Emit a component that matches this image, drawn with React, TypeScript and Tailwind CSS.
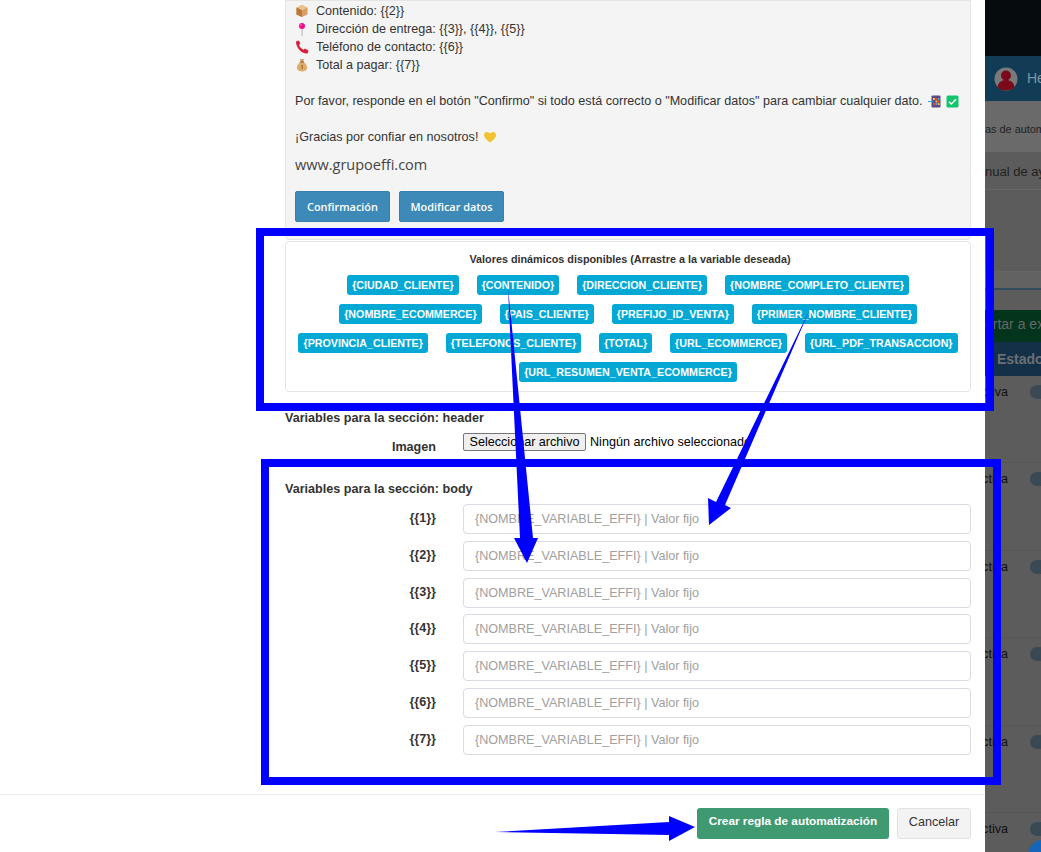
const chips = [
  "{CIUDAD_CLIENTE}",
  "{CONTENIDO}",
  "{DIRECCION_CLIENTE}",
  "{NOMBRE_COMPLETO_CLIENTE}",
  "{NOMBRE_ECOMMERCE}",
  "{PAIS_CLIENTE}",
  "{PREFIJO_ID_VENTA}",
  "{PRIMER_NOMBRE_CLIENTE}",
  "{PROVINCIA_CLIENTE}",
  "{TELEFONOS_CLIENTE}",
  "{TOTAL}",
  "{URL_ECOMMERCE}",
  "{URL_PDF_TRANSACCION}",
  "{URL_RESUMEN_VENTA_ECOMMERCE}",
];

const BoxIcon = () => (
  <svg width="14" height="14" viewBox="0 0 14 14" className="shrink-0">
    <path d="M7 1l5.500 2.600v6.800L7 13 1.500 10.400V3.600z" fill="#d9a066" />
    <path d="M7 6.200L1.500 3.600 7 1l5.500 2.600z" fill="#eec28e" />
    <path d="M7 6.200V13L1.500 10.400V3.600z" fill="#b87a3c" />
  </svg>
);
const PinIcon = () => (
  <svg width="14" height="14" viewBox="0 0 14 14" className="shrink-0">
    <rect x="6.500" y="5" width="1.200" height="9" fill="#b9bfc4" />
    <circle cx="7" cy="4" r="3" fill="#ee0d8c" />
    <circle cx="6" cy="3" r="0.800" fill="#ff8ccb" />
  </svg>
);
const PhoneIcon = () => (
  <svg width="14" height="14" viewBox="0 0 14 14" className="shrink-0">
    <path d="M1 1.500L3.800 0.500 5.300 3.600 4 5c.7 2 2.300 3.800 4.600 4.700L10 8.400l3.400 2.200-.6 2.600c-2.200.6-5.200-.2-7.600-2.400C2.600 8.400.8 4.500 1 1.500z" fill="#d8203a" />
  </svg>
);
const BagIcon = () => (
  <svg width="14" height="14" viewBox="0 0 14 14" className="shrink-0">
    <path d="M5 1h4L8.300 4h-2.600z" fill="#d9a066" />
    <path d="M5.500 4h3c2.500 1.500 4 4 3.500 6.500C11.600 12.600 9.500 13.500 7 13.500S2.400 12.600 2 10.500C1.500 8 3 5.500 5.500 4z" fill="#e0ac6c" />
    <rect x="5" y="3.500" width="4" height="1" fill="#8a5a2c" />
    <rect x="6.500" y="7" width="1.200" height="4" fill="#9a6a3a" />
  </svg>
);
const PhoneArrowIcon = () => (
  <svg width="13" height="13" viewBox="0 0 13 13" className="shrink-0">
    <rect x="3.500" y="0.500" width="9" height="12" rx="1" fill="#5b4a86" />
    <rect x="5" y="3" width="2" height="2" fill="#f2c230" />
    <rect x="7.500" y="3" width="2" height="2" fill="#e5463a" />
    <rect x="10" y="3" width="1.500" height="2" fill="#4aa3e8" />
    <rect x="7.500" y="5.500" width="2" height="2" fill="#f2c230" />
    <rect x="10" y="5.500" width="1.500" height="2" fill="#e5463a" />
    <rect x="5" y="8" width="2" height="2" fill="#e5463a" />
    <rect x="7.500" y="8" width="2" height="2" fill="#4aa3e8" />
    <rect x="10" y="8" width="1.500" height="2" fill="#f2c230" />
    <path d="M0 6h5v1H0z" fill="#2aa5e8" />
  </svg>
);
const CheckIcon = () => (
  <svg width="13" height="13" viewBox="0 0 13 13" className="shrink-0">
    <rect x="0.500" y="0.500" width="12" height="12" rx="1.500" fill="#12c46c" />
    <path d="M3 6.800l2.300 2.200L10 4.300" fill="none" stroke="#fff" strokeWidth="1.500" />
  </svg>
);
const HeartIcon = () => (
  <svg width="14" height="14" viewBox="0 0 14 14" className="shrink-0">
    <path d="M7 12.500C3 9.500 1 7.500 1 5c0-2 1.500-3 2.900-3C5.200 2 6.400 2.700 7 3.800 7.600 2.700 8.800 2 10.100 2 11.500 2 13 3 13 5c0 2.500-2 4.500-6 7.500z" fill="#f2c230" />
  </svg>
);

const Overlay = () => (
  <>
    <div className="absolute left-[256px] top-[228px] w-[738px] h-[183px] border-[8px] border-[#0000ff]" />
    <div className="absolute left-[261px] top-[459px] w-[740px] h-[326px] border-[8px] border-[#0000ff]" />
    <svg className="absolute left-0 top-0" width="1041" height="852" viewBox="0 0 1041 852">
      <polygon points="508,288 520,538 514,538 527,563 538,538 533,538" fill="#0000ff" />
      <polygon points="810,309 725,505 731,508 709,525 708,498 716,502" fill="#0000ff" />
      <polygon points="495,832 669,822 669,816 695,827 669,841 669,835" fill="#0000ff" />
    </svg>
  </>
);

export default function App() {
  return (
    <div
      className="relative w-[1041px] h-[852px] overflow-hidden flex bg-white text-[12.6px] text-[#333]"
      style={{ fontFamily: '"Liberation Sans", Arial, sans-serif' }}
    >
      <main className="w-[985px] h-[852px] shrink-0 flex flex-col bg-white">
        <div className="flex-1 pl-[285px] pr-[14px] overflow-hidden">
          <section className="h-[240px] bg-[#f4f4f4] border border-[#e5e5e5] rounded-b-[4px] pl-[9px] pt-[1px]">
            <div className="flex flex-col leading-[18px]">
              <div className="flex items-center gap-[7px]"><BoxIcon /><span>Contenido: {"{{2}}"}</span></div>
              <div className="flex items-center gap-[7px]"><PinIcon /><span>Dirección de entrega: {"{{3}}, {{4}}, {{5}}"}</span></div>
              <div className="flex items-center gap-[7px]"><PhoneIcon /><span>Teléfono de contacto: {"{{6}}"}</span></div>
              <div className="flex items-center gap-[7px]"><BagIcon /><span>Total a pagar: {"{{7}}"}</span></div>
            </div>
            <div className="mt-[18px] flex items-center gap-[5px] leading-[18px] whitespace-nowrap">
              <span>Por favor, responde en el botón "Confirmo" si todo está correcto o "Modificar datos" para cambiar cualquier dato.</span>
              <PhoneArrowIcon />
              <CheckIcon />
            </div>
            <div className="mt-[18px] flex items-center gap-[5px] leading-[18px]">
              <span>¡Gracias por confiar en nosotros!</span>
              <HeartIcon />
            </div>
            <div className="mt-[8px] text-[14.5px] leading-[22px] text-[#444]" style={{ fontFamily: '"Open Sans", sans-serif' }}>
              www.grupoeffi.com
            </div>
            <div className="mt-[15px] flex gap-[9px]" style={{ fontFamily: '"Open Sans", sans-serif' }}>
              <button className="h-[31px] w-[95px] pt-[1px] rounded-[2px] bg-[#3d8ab9] border border-[#3580ad] text-white text-[10.9px] font-semibold">Confirmación</button>
              <button className="h-[31px] w-[105px] pt-[1px] rounded-[2px] bg-[#3d8ab9] border border-[#3580ad] text-white text-[10.9px] font-semibold">Modificar datos</button>
            </div>
          </section>

          <section className="mt-[1px] h-[151px] border border-[#e5e5e5] rounded-[4px] px-[3px] pt-[10px]">
            <div className="text-center text-[10.8px] font-bold leading-[14px] pl-[4px]">Valores dinámicos disponibles (Arrastre a la variable deseada)</div>
            <div className="mt-[9px] flex flex-wrap justify-center gap-x-[18px] gap-y-[9px]">
              {chips.map((c) => (
                <span key={c} className="h-[20px] px-[5px] rounded-[3px] bg-[#03a9d4] text-white text-[10.7px] leading-[20px] font-bold whitespace-nowrap">
                  {c}
                </span>
              ))}
            </div>
          </section>

          <h3 className="mt-[19px] font-bold leading-[14px]">Variables para la sección: header</h3>
          <div className="mt-[8px] flex items-start">
            <label className="w-[151px] text-right font-bold mt-[7px] leading-[14px]">Imagen</label>
            <div className="ml-[27px] flex items-center whitespace-nowrap">
              <span className="h-[18px] w-[123px] bg-[#efefef] border border-[#767676] rounded-[2px] text-center text-black leading-[16px]">Seleccionar archivo</span>
              <span className="ml-[4px] text-black">Ningún archivo seleccionado</span>
            </div>
          </div>

          <h3 className="mt-[28px] font-bold leading-[14px]">Variables para la sección: body</h3>
          <div className="mt-[8px] flex flex-col gap-[6.8px]">
            {[1, 2, 3, 4, 5, 6, 7].map((n) => (
              <div key={n} className="flex items-start">
                <label className="w-[151px] text-right font-bold mt-[7px] leading-[14px]">{`{{${n}}}`}</label>
                <input
                  placeholder="{NOMBRE_VARIABLE_EFFI} | Valor fijo"
                  className="ml-[27px] w-[508px] h-[30px] px-[11px] rounded-[4px] border border-[#d8dbe3] bg-white text-[12.6px] placeholder:text-[#a0a0a0] outline-none"
                />
              </div>
            ))}
          </div>
        </div>
        <footer className="h-[58px] shrink-0 border-t border-[#eeeeee] flex items-start justify-end gap-[8px] pt-[13px] pr-[14px]">
          <button className="h-[31px] w-[192px] pb-[3px] rounded-[3px] bg-[#3f9a72] text-white text-[11.8px] font-bold">Crear regla de automatización</button>
          <button className="h-[31px] w-[74px] pb-[3px] rounded-[3px] bg-[#f3f3f3] border border-[#e2e2e2] text-[#333]">Cancelar</button>
        </footer>
      </main>

      <aside className="w-[56px] h-[852px] shrink-0 bg-[#5c5c5c] flex flex-col overflow-hidden">
        <div className="h-[56px] shrink-0 bg-[#060b0d]" />
        <div className="h-[45px] shrink-0 bg-[#123b55] flex items-center pl-[9px] gap-[9px] overflow-hidden">
          <svg width="24" height="24" viewBox="0 0 24 24" className="shrink-0">
            <circle cx="12" cy="12" r="11.500" fill="#7a7a7a" />
            <circle cx="12" cy="8.500" r="5" fill="#7a0a1a" />
            <path d="M3.500 20c1-5 4-7 8.500-7s7.500 2 8.500 7c-2 2.500-5 3.500-8.500 3.500S5.500 22.500 3.500 20z" fill="#7a0a1a" />
          </svg>
          <span className="text-[14px] text-[#7f95a3]">He</span>
        </div>
        <div className="h-[51px] shrink-0 bg-[#6a6a6a] flex items-center pt-[5px] overflow-hidden whitespace-nowrap">
          <span className="text-[10.9px] text-[#222]">as de autom</span>
        </div>
        <div className="h-[38px] shrink-0 border-b border-[#666] flex items-center pt-[2px] overflow-hidden whitespace-nowrap">
          <span className="text-[13px] text-[#222]">nual de ay</span>
        </div>
        <div className="h-[82px] shrink-0 border-b border-[#666]" />
        <div className="h-[18px] shrink-0 bg-[#626262] border-b-2 border-[#2f4a5a]" />
        <div className="h-[20px] shrink-0" />
        <div className="h-[32px] shrink-0 pb-[3px] bg-[#02351c] flex items-center overflow-hidden whitespace-nowrap">
          <span className="text-[14px] text-[#666]">ortar a ex</span>
        </div>
        <div className="h-[34px] shrink-0 bg-[#143049] flex items-center pl-[12px] overflow-hidden whitespace-nowrap">
          <span className="text-[14px] font-bold text-[#6a6f73]">Estado</span>
        </div>
        {[0, 1, 2, 3, 4, 5].map((i) => (
          <div key={i} className="h-[87.4px] shrink-0 border-b border-[#565656] flex items-start justify-between pt-[9px] overflow-hidden whitespace-nowrap">
            <span className="w-[23px] flex justify-end text-[#111] leading-[14px]">ctiva</span>
            <span className="w-[11px] h-[14px] rounded-l-full bg-[#3a4a55]" />
          </div>
        ))}
      </aside>

      <div className="absolute left-[1028px] top-[840px] w-[30px] h-[30px] rounded-full bg-[#1565b8]" />
      <Overlay />
    </div>
  );
}
